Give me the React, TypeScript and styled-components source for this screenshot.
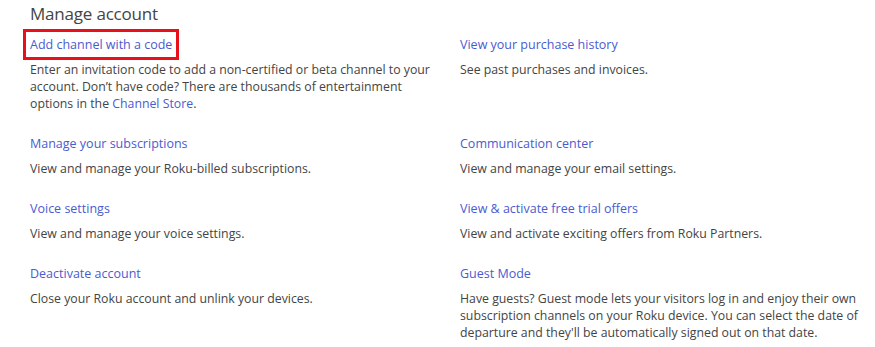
import React from "react";
import styled, { createGlobalStyle } from "styled-components";

const Global = createGlobalStyle`
  html, body { margin: 0; padding: 0; background: #fff; }
  body { font-family: "Open Sans", "Liberation Sans", sans-serif; }
`;

const Page = styled.div`
  padding: 2px 15px 0 30px;
  width: 875px;
  box-sizing: border-box;
`;

const Heading = styled.h2`
  margin: 0 0 10px;
  font-size: 17px;
  font-weight: 400;
  letter-spacing: -0.2px;
  line-height: 24px;
  color: #444;
`;

const Grid = styled.div`
  display: grid;
  grid-template-columns: 410px 410px;
  column-gap: 20px;
  row-gap: 23px;
`;

const Item = styled.div`
  display: flex;
  flex-direction: column;
  gap: 8px;
`;

const LinkTitle = styled.a<{ $boxed?: boolean }>`
  align-self: flex-start;
  font-size: 12.5px;
  line-height: 17px;
  color: #4a5bd0;
  text-decoration: none;
  outline: ${(p) => (p.$boxed ? "3px solid #e8101a" : "none")};
  outline-offset: 4px;
`;

const Desc = styled.p`
  margin: 0;
  font-size: 12.3px;
  line-height: 17px;
  color: #444;
`;

const InlineLink = styled.a`
  color: #4a5bd0;
  text-decoration: none;
`;

type Entry = { title: string; desc: React.ReactNode; boxed?: boolean };

const entries: Entry[] = [
  {
    title: "Add channel with a code",
    boxed: true,
    desc: (
      <>
        Enter an invitation code to add a non-certified or beta channel to your account. Don’t have
        code? There are thousands of entertainment options in the <InlineLink href="#">Channel Store</InlineLink>.
      </>
    ),
  },
  { title: "View your purchase history", desc: "See past purchases and invoices." },
  { title: "Manage your subscriptions", desc: "View and manage your Roku-billed subscriptions." },
  { title: "Communication center", desc: "View and manage your email settings." },
  { title: "Voice settings", desc: "View and manage your voice settings." },
  { title: "View & activate free trial offers", desc: "View and activate exciting offers from Roku Partners." },
  { title: "Deactivate account", desc: "Close your Roku account and unlink your devices." },
  {
    title: "Guest Mode",
    desc: "Have guests? Guest mode lets your visitors log in and enjoy their own subscription channels on your Roku device. You can select the date of departure and they'll be automatically signed out on that date.",
  },
];

export default function App() {
  return (
    <>
      <Global />
      <Page>
        <Heading>Manage account</Heading>
        <Grid>
          {entries.map((e) => (
            <Item key={e.title}>
              <LinkTitle href="#" $boxed={e.boxed}>
                {e.title}
              </LinkTitle>
              <Desc>{e.desc}</Desc>
            </Item>
          ))}
        </Grid>
      </Page>
    </>
  );
}
